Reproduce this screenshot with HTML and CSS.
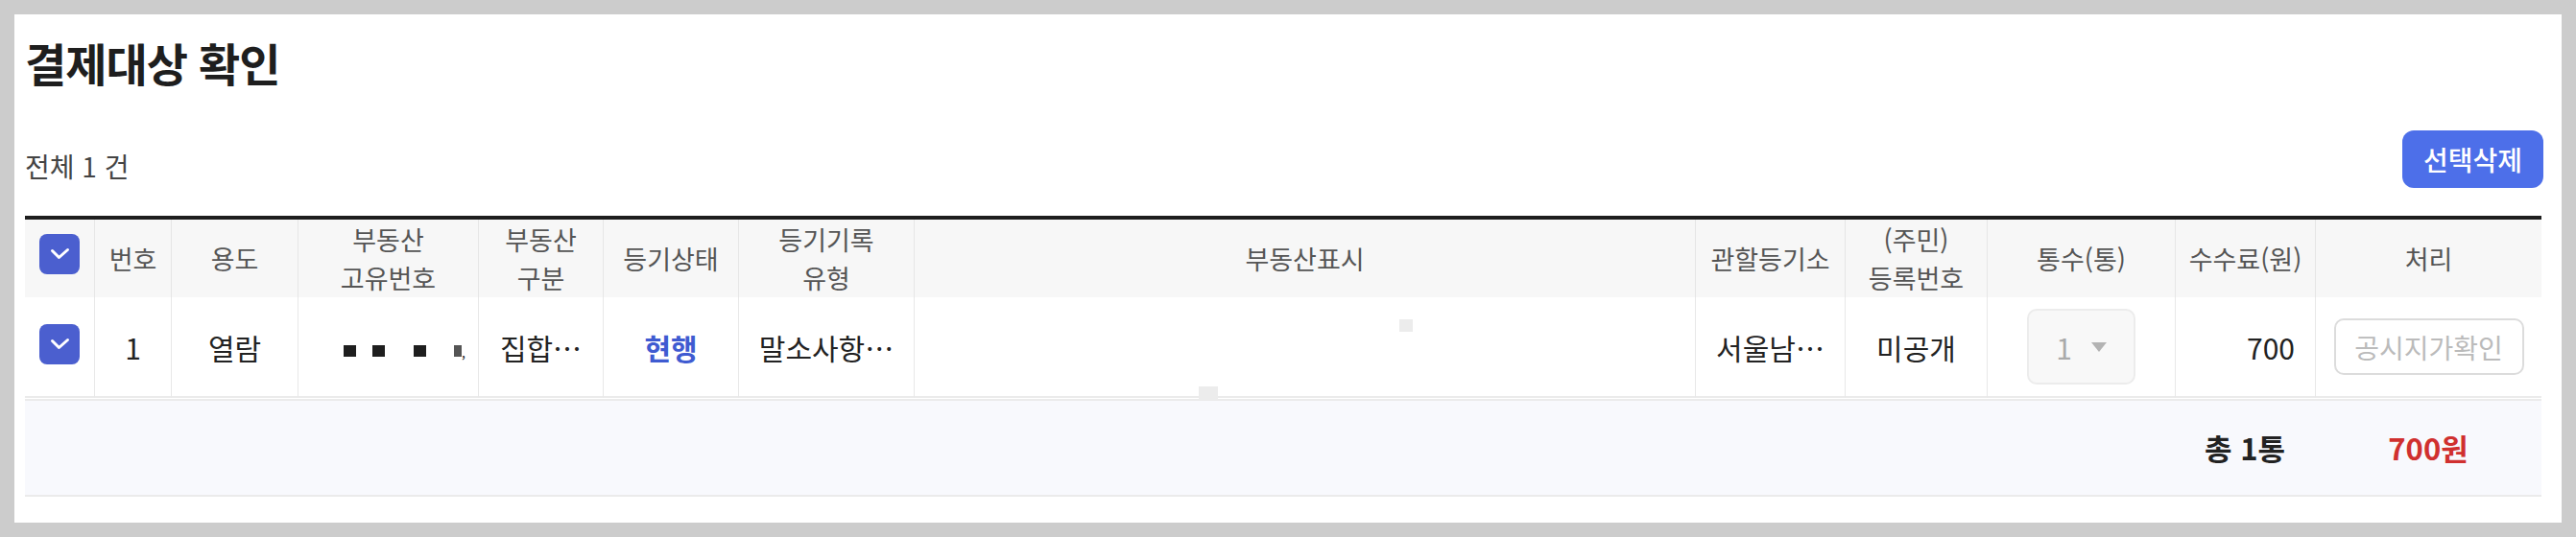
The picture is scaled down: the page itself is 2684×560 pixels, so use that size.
FILE: index.html
```html
<!DOCTYPE html>
<html lang="ko">
<head>
    <meta charset="UTF-8">
    <meta name="viewport" content="width=device-width, initial-scale=1.0">
    <title>결제대상 확인</title>
    <link rel="stylesheet" href="styles.css">
</head>
<body>
    <div class="wrap">
        <h2 class="title">결제대상 확인</h2>
        <div class="toolbar">
            <p class="count">전체 1 건</p>
            <button class="btn-del">선택삭제</button>
        </div>
        <table class="list">
            <colgroup>
                <col class="c-chk">
                <col class="c-no">
                <col class="c-use">
                <col class="c-uid">
                <col class="c-type">
                <col class="c-state">
                <col class="c-rec">
                <col class="c-addr">
                <col class="c-office">
                <col class="c-reg">
                <col class="c-cnt">
                <col class="c-fee">
                <col class="c-act">
            </colgroup>
            <thead>
                <tr>
                    <th class="chk-cell"><span class="chk"><svg width="42" height="42" viewBox="0 0 42 42"><polyline points="13.5,17.5 20.5,24.5 29.5,16.5" fill="none" stroke="#fff" stroke-width="3" stroke-linecap="round" stroke-linejoin="round"/></svg></span></th>
                    <th>번호</th>
                    <th>용도</th>
                    <th>부동산<br>고유번호</th>
                    <th>부동산<br>구분</th>
                    <th>등기상태</th>
                    <th>등기기록<br>유형</th>
                    <th>부동산표시</th>
                    <th>관할등기소</th>
                    <th>(주민)<br>등록번호</th>
                    <th>통수(통)</th>
                    <th>수수료(원)</th>
                    <th>처리</th>
                </tr>
            </thead>
            <tbody>
                <tr>
                    <td class="chk-cell"><span class="chk"><svg width="42" height="42" viewBox="0 0 42 42"><polyline points="13.5,17.5 20.5,24.5 29.5,16.5" fill="none" stroke="#fff" stroke-width="3" stroke-linecap="round" stroke-linejoin="round"/></svg></span></td>
                    <td>1</td>
                    <td>열람</td>
                    <td class="uid"><i class="m1"></i><i class="m2"></i><i class="m3"></i><i class="m4"></i><b>,</b></td>
                    <td>집합…</td>
                    <td class="state">현행</td>
                    <td>말소사항…</td>
                    <td class="addr"><span class="ghost g1"></span><span class="ghost g2"></span></td>
                    <td>서울남…</td>
                    <td>미공개</td>
                    <td><span class="sel">1<span class="arrow"></span></span></td>
                    <td class="fee">700</td>
                    <td><button class="btn-chk">공시지가확인</button></td>
                </tr>
            </tbody>
            <tfoot>
                <tr>
                    <td colspan="11"></td>
                    <td>총 1통</td>
                    <td class="sum-price">700원</td>
                </tr>
            </tfoot>
        </table>
    </div>
</body>
</html>
```

FILE: styles.css
```css
*{
    margin: 0;
    padding: 0;
    box-sizing: border-box;
}
body{
    background-color: #ccc;
    padding: 15px;
    font-family: "Noto Sans CJK KR", "Noto Sans", sans-serif;
    color: #222;
}
.wrap{
    background-color: #fff;
    height: 530px;
    padding: 20px 21px 0 11px;
}
.title{
    font-size: 47px;
    line-height: 60px;
    font-weight: 700;
    letter-spacing: -1px;
    color: #1e1e1e;
}
.toolbar{
    display: flex;
    justify-content: space-between;
    align-items: flex-end;
    margin-top: 41px;
    margin-right: -2px;
}
.count{
    font-size: 28px;
    line-height: 46px;
    color: #444;
}
.btn-del{
    width: 147px;
    height: 60px;
    border: 0;
    border-radius: 12px;
    background-color: #4d6fe9;
    color: #fff;
    font-family: inherit;
    font-size: 28px;
    font-weight: 500;
}
.list{
    width: 2622px;
    margin-top: 29px;
    table-layout: fixed;
    border-collapse: separate;
    border-spacing: 0;
    border-top: 4px solid #1e1e1e;
}
.c-chk{ width: 72px; }
.c-no{ width: 80px; }
.c-use{ width: 132px; }
.c-uid{ width: 188px; }
.c-type{ width: 130px; }
.c-state{ width: 141px; }
.c-rec{ width: 183px; }
.c-addr{ width: 814px; }
.c-office{ width: 156px; }
.c-reg{ width: 148px; }
.c-cnt{ width: 196px; }
.c-fee{ width: 146px; }
.c-act{ width: 236px; }

.list th{
    height: 81px;
    background-color: #f7f7f7;
    font-size: 27px;
    line-height: 40px;
    font-weight: 400;
    color: #555;
    border-left: 1px solid #e6e6e6;
}
.list tbody td{
    height: 105px;
    font-size: 30px;
    text-align: center;
    white-space: nowrap;
    overflow: hidden;
    border-left: 1px solid #e8e8e8;
    border-bottom: 2px solid #ebebeb;
}
.list th:first-child,
.list tbody td:first-child{
    border-left: 0;
}
.chk{
    display: block;
    width: 42px;
    height: 42px;
    margin: 0 auto;
    border-radius: 8px;
    background-color: #4b5fcf;
}
.chk svg{
    display: block;
}
.list th.chk-cell{
    padding-bottom: 10px;
}
.list td.chk-cell{
    padding-bottom: 6px;
}
.uid{
    text-align: left !important;
    padding-left: 47px;
}
.uid i{
    display: inline-block;
    width: 13px;
    height: 12px;
    background-color: #1e1e1e;
    vertical-align: middle;
}
.uid .m2{ margin-left: 17px; }
.uid .m3{ margin-left: 30px; }
.uid .m4{ margin-left: 29px; width: 8px; background-color: #555; }
.uid b{
    font-weight: 400;
    font-size: 14px;
    vertical-align: middle;
}
.state{
    color: #3f5bd1;
    font-weight: 700;
}
.addr{
    position: relative;
    overflow: visible !important;
}
.ghost{
    position: absolute;
    background-color: #ececec;
}
.g1{
    left: 505px;
    top: 23px;
    width: 14px;
    height: 13px;
}
.g2{
    left: 296px;
    top: 93px;
    width: 20px;
    height: 14px;
    z-index: 1;
}
.sel{
    display: inline-flex;
    align-items: center;
    justify-content: center;
    gap: 20px;
    width: 113px;
    height: 79px;
    border: 2px solid #ececec;
    border-radius: 10px;
    background-color: #f8f8f8;
    color: #aaa;
    vertical-align: middle;
}
.arrow{
    width: 0;
    height: 0;
    border-left: 8px solid transparent;
    border-right: 8px solid transparent;
    border-top: 10px solid #b3b3b3;
}
.list td.fee{
    text-align: right;
    padding-right: 21px;
}
.btn-chk{
    width: 198px;
    height: 59px;
    border: 2px solid #dcdcdc;
    border-radius: 10px;
    background-color: #fff;
    color: #bbb;
    font-family: inherit;
    font-size: 28px;
    vertical-align: middle;
}
.list tfoot td{
    height: 103px;
    background-color: #f8f9fd;
    border-top: 1px solid #fff;
    border-bottom: 2px solid #ebebeb;
    box-shadow: inset 0 2px 0 #ebebeb;
    font-size: 31px;
    font-weight: 700;
    text-align: center;
}
.list tfoot .sum-price{
    color: #d0302f;
}
```
